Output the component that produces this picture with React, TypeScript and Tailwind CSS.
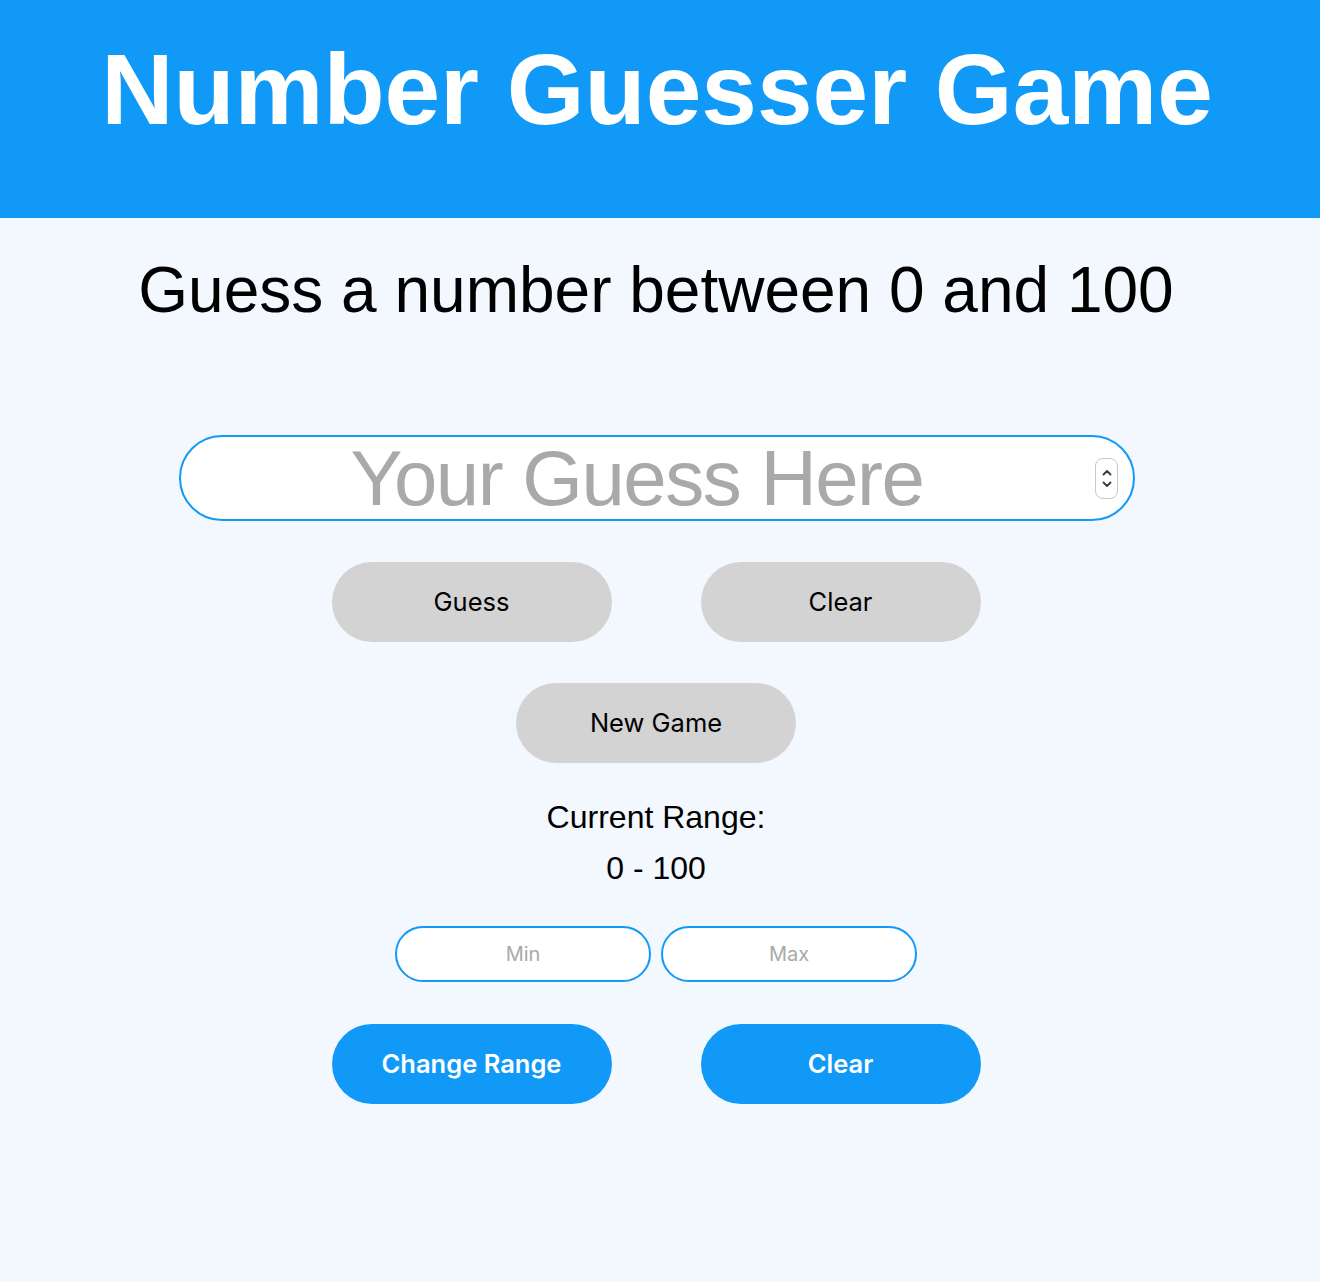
import { useState } from 'react';

const pill = 'w-[280px] h-[80px] rounded-full text-[25.5px] font-["Inter","Roboto",sans-serif]';

const Spinner = () => (
    <div className="absolute right-[17px] top-[23px] w-[23px] h-[41px] rounded-[8px] border border-[#c8c8c8] bg-white flex flex-col items-center justify-center gap-[5px]">
        <svg width="10" height="7" viewBox="0 0 10 7" fill="none" stroke="#3a3a3a" strokeWidth="1.8" strokeLinecap="round" strokeLinejoin="round">
            <path d="M1.5 5.5 L5 2 L8.5 5.5" />
        </svg>
        <svg width="10" height="7" viewBox="0 0 10 7" fill="none" stroke="#3a3a3a" strokeWidth="1.8" strokeLinecap="round" strokeLinejoin="round">
            <path d="M1.5 1.5 L5 5 L8.5 1.5" />
        </svg>
    </div>
);

export default function App() {
    const [guess, setGuess] = useState('');
    const [min, setMin] = useState('');
    const [max, setMax] = useState('');

    return (
        <div className="min-h-[1282px] w-full bg-[#f3f8fe] font-['Liberation_Sans',Arial,sans-serif] text-black">
            {/* Header */}
            <header className="h-[218px] bg-[#1199f7] pt-[32px] pr-[6px] text-center">
                <h1 className="text-[100px] leading-[115px] font-bold text-white">Number Guesser Game</h1>
            </header>

            <main className="flex flex-col items-center pr-[8px]">
                <h2 className="mt-[35px] text-[64px] leading-[74px] font-normal">Guess a number between 0 and 100</h2>

                {/* Guess input */}
                <div className="relative mt-[108px] ml-[2px]">
                    <input
                        type="text"
                        value={guess}
                        onChange={(e) => setGuess(e.target.value)}
                        placeholder="Your Guess Here"
                        className="w-[956px] h-[86px] rounded-full border-2 border-[#1199f7] bg-white pr-[40px] text-center text-[78px] tracking-[-1.5px] leading-none placeholder:text-[#a9a9a9] outline-none"
                    />
                    <Spinner />
                </div>

                <div className="mt-[41px] flex gap-[89px]">
                    <button className={`${pill} bg-[#d3d3d3] text-black`}>Guess</button>
                    <button className={`${pill} bg-[#d3d3d3] text-black`}>Clear</button>
                </div>

                <button className={`${pill} mt-[41px] bg-[#d3d3d3] text-black`}>New Game</button>

                {/* Range */}
                <p className="mt-[36px] text-[32px] leading-[36px]">Current Range:</p>
                <p className="mt-[15px] text-[32px] leading-[36px]">0 - 100</p>

                <div className="mt-[40px] flex gap-[10px]">
                    <input
                        type="text"
                        value={min}
                        onChange={(e) => setMin(e.target.value)}
                        placeholder="Min"
                        className="w-[256px] h-[56px] rounded-full border-2 border-[#1199f7] bg-white text-center text-[20px] font-['Inter','Roboto',sans-serif] placeholder:text-[#a9a9a9] outline-none"
                    />
                    <input
                        type="text"
                        value={max}
                        onChange={(e) => setMax(e.target.value)}
                        placeholder="Max"
                        className="w-[256px] h-[56px] rounded-full border-2 border-[#1199f7] bg-white text-center text-[20px] font-['Inter','Roboto',sans-serif] placeholder:text-[#a9a9a9] outline-none"
                    />
                </div>

                <div className="mt-[42px] flex gap-[89px]">
                    <button className={`${pill} bg-[#1199f7] text-white font-semibold`}>Change Range</button>
                    <button className={`${pill} bg-[#1199f7] text-white font-semibold`}>Clear</button>
                </div>
            </main>
        </div>
    );
}
